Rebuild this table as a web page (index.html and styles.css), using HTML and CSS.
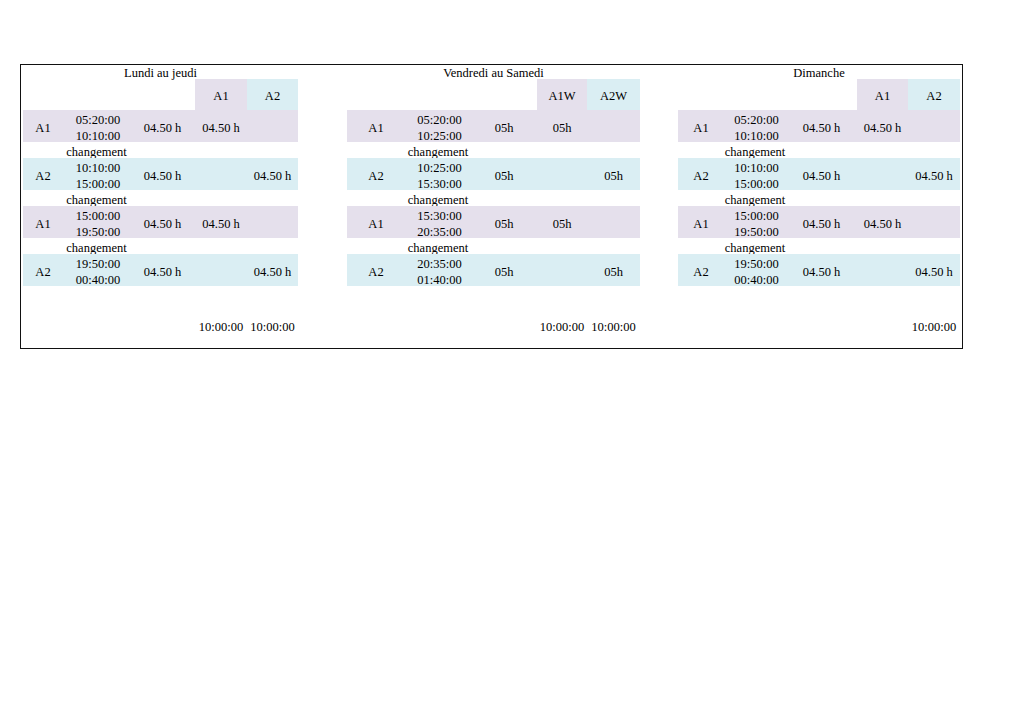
FILE: index.html
```html
<!DOCTYPE html>
<html lang="fr">
<head>
<meta charset="utf-8">
<title>Planning</title>
<link rel="stylesheet" href="styles.css">
</head>
<body>
<div class="sheet">
  <div class="frame">
    <section class="plan plan-a">
      <div class="title">Lundi au jeudi</div>
      <div class="row head"><span></span><span></span><span></span><span class="c4 p">A1</span><span class="c5 b">A2</span></div>
      <div class="row shift p"><span>A1</span><span class="times">05:20:00<br>10:10:00</span><span>04.50 h</span><span>04.50 h</span><span></span></div>
      <div class="row change"><span></span><span>changement</span></div>
      <div class="row shift b"><span>A2</span><span class="times">10:10:00<br>15:00:00</span><span>04.50 h</span><span></span><span>04.50 h</span></div>
      <div class="row change"><span></span><span>changement</span></div>
      <div class="row shift p"><span>A1</span><span class="times">15:00:00<br>19:50:00</span><span>04.50 h</span><span>04.50 h</span><span></span></div>
      <div class="row change"><span></span><span>changement</span></div>
      <div class="row shift b"><span>A2</span><span class="times">19:50:00<br>00:40:00</span><span>04.50 h</span><span></span><span>04.50 h</span></div>
      <div class="spacer"></div>
      <div class="row total"><span></span><span></span><span></span><span>10:00:00</span><span>10:00:00</span></div>
    </section>

    <section class="plan plan-b">
      <div class="title">Vendredi au Samedi</div>
      <div class="row head"><span></span><span></span><span></span><span class="c4 p">A1W</span><span class="c5 b">A2W</span></div>
      <div class="row shift p"><span>A1</span><span class="times">05:20:00<br>10:25:00</span><span>05h</span><span>05h</span><span></span></div>
      <div class="row change"><span></span><span>changement</span></div>
      <div class="row shift b"><span>A2</span><span class="times">10:25:00<br>15:30:00</span><span>05h</span><span></span><span>05h</span></div>
      <div class="row change"><span></span><span>changement</span></div>
      <div class="row shift p"><span>A1</span><span class="times">15:30:00<br>20:35:00</span><span>05h</span><span>05h</span><span></span></div>
      <div class="row change"><span></span><span>changement</span></div>
      <div class="row shift b"><span>A2</span><span class="times">20:35:00<br>01:40:00</span><span>05h</span><span></span><span>05h</span></div>
      <div class="spacer"></div>
      <div class="row total"><span></span><span></span><span></span><span>10:00:00</span><span>10:00:00</span></div>
    </section>

    <section class="plan plan-c">
      <div class="title">Dimanche</div>
      <div class="row head"><span></span><span></span><span></span><span class="c4 p">A1</span><span class="c5 b">A2</span></div>
      <div class="row shift p"><span>A1</span><span class="times">05:20:00<br>10:10:00</span><span>04.50 h</span><span>04.50 h</span><span></span></div>
      <div class="row change"><span></span><span>changement</span></div>
      <div class="row shift b"><span>A2</span><span class="times">10:10:00<br>15:00:00</span><span>04.50 h</span><span></span><span>04.50 h</span></div>
      <div class="row change"><span></span><span>changement</span></div>
      <div class="row shift p"><span>A1</span><span class="times">15:00:00<br>19:50:00</span><span>04.50 h</span><span>04.50 h</span><span></span></div>
      <div class="row change"><span></span><span>changement</span></div>
      <div class="row shift b"><span>A2</span><span class="times">19:50:00<br>00:40:00</span><span>04.50 h</span><span></span><span>04.50 h</span></div>
      <div class="spacer"></div>
      <div class="row total"><span></span><span></span><span></span><span></span><span>10:00:00</span></div>
    </section>
  </div>
</div>
</body>
</html>
```

FILE: styles.css
```css
html, body {
  margin: 0;
  padding: 0;
  background: #ffffff;
}

body {
  font-family: "Liberation Serif", "Times New Roman", serif;
  font-size: 12.5px;
  color: #000000;
  width: 1024px;
  height: 722px;
  overflow: hidden;
}

.sheet {
  padding: 64px 0 0 20px;
}

.frame {
  width: 939px;
  height: 271px;
  border: 1px solid #111111;
  padding: 0 0 12px 2px;
  box-sizing: content-box;
  display: flex;
  align-items: flex-start;
}

.plan {
  display: flex;
  flex-direction: column;
}

.plan-a {
  --cols: 40px 67px 65px 52px 51px;
  width: 275px;
  margin-right: 49px;
}

.plan-b {
  --cols: 58px 66px 66px 50px 53px;
  width: 293px;
  margin-right: 38px;
}

.plan-c {
  --cols: 46px 62px 71px 51px 52px;
  width: 282px;
}

.title {
  height: 14px;
  line-height: 16px;
  text-align: center;
  white-space: nowrap;
}

.row {
  display: grid;
  grid-template-columns: var(--cols);
  text-align: center;
  white-space: nowrap;
}

.row > span {
  display: flex;
  align-items: center;
  justify-content: center;
  box-sizing: border-box;
}

.head {
  height: 31px;
}

.shift {
  height: 32px;
}

.head > span {
  padding-top: 4px;
}

.shift > span {
  padding-top: 2px;
}

.change {
  height: 16px;
  line-height: 16px;
}

.change > span {
  padding-top: 2px;
}

.spacer {
  height: 32px;
}

.total {
  height: 18px;
}

.times {
  line-height: 16px;
  padding-left: 3px;
}

.p {
  background: #e5e0ec;
}

.b {
  background: #daeef3;
}
```
